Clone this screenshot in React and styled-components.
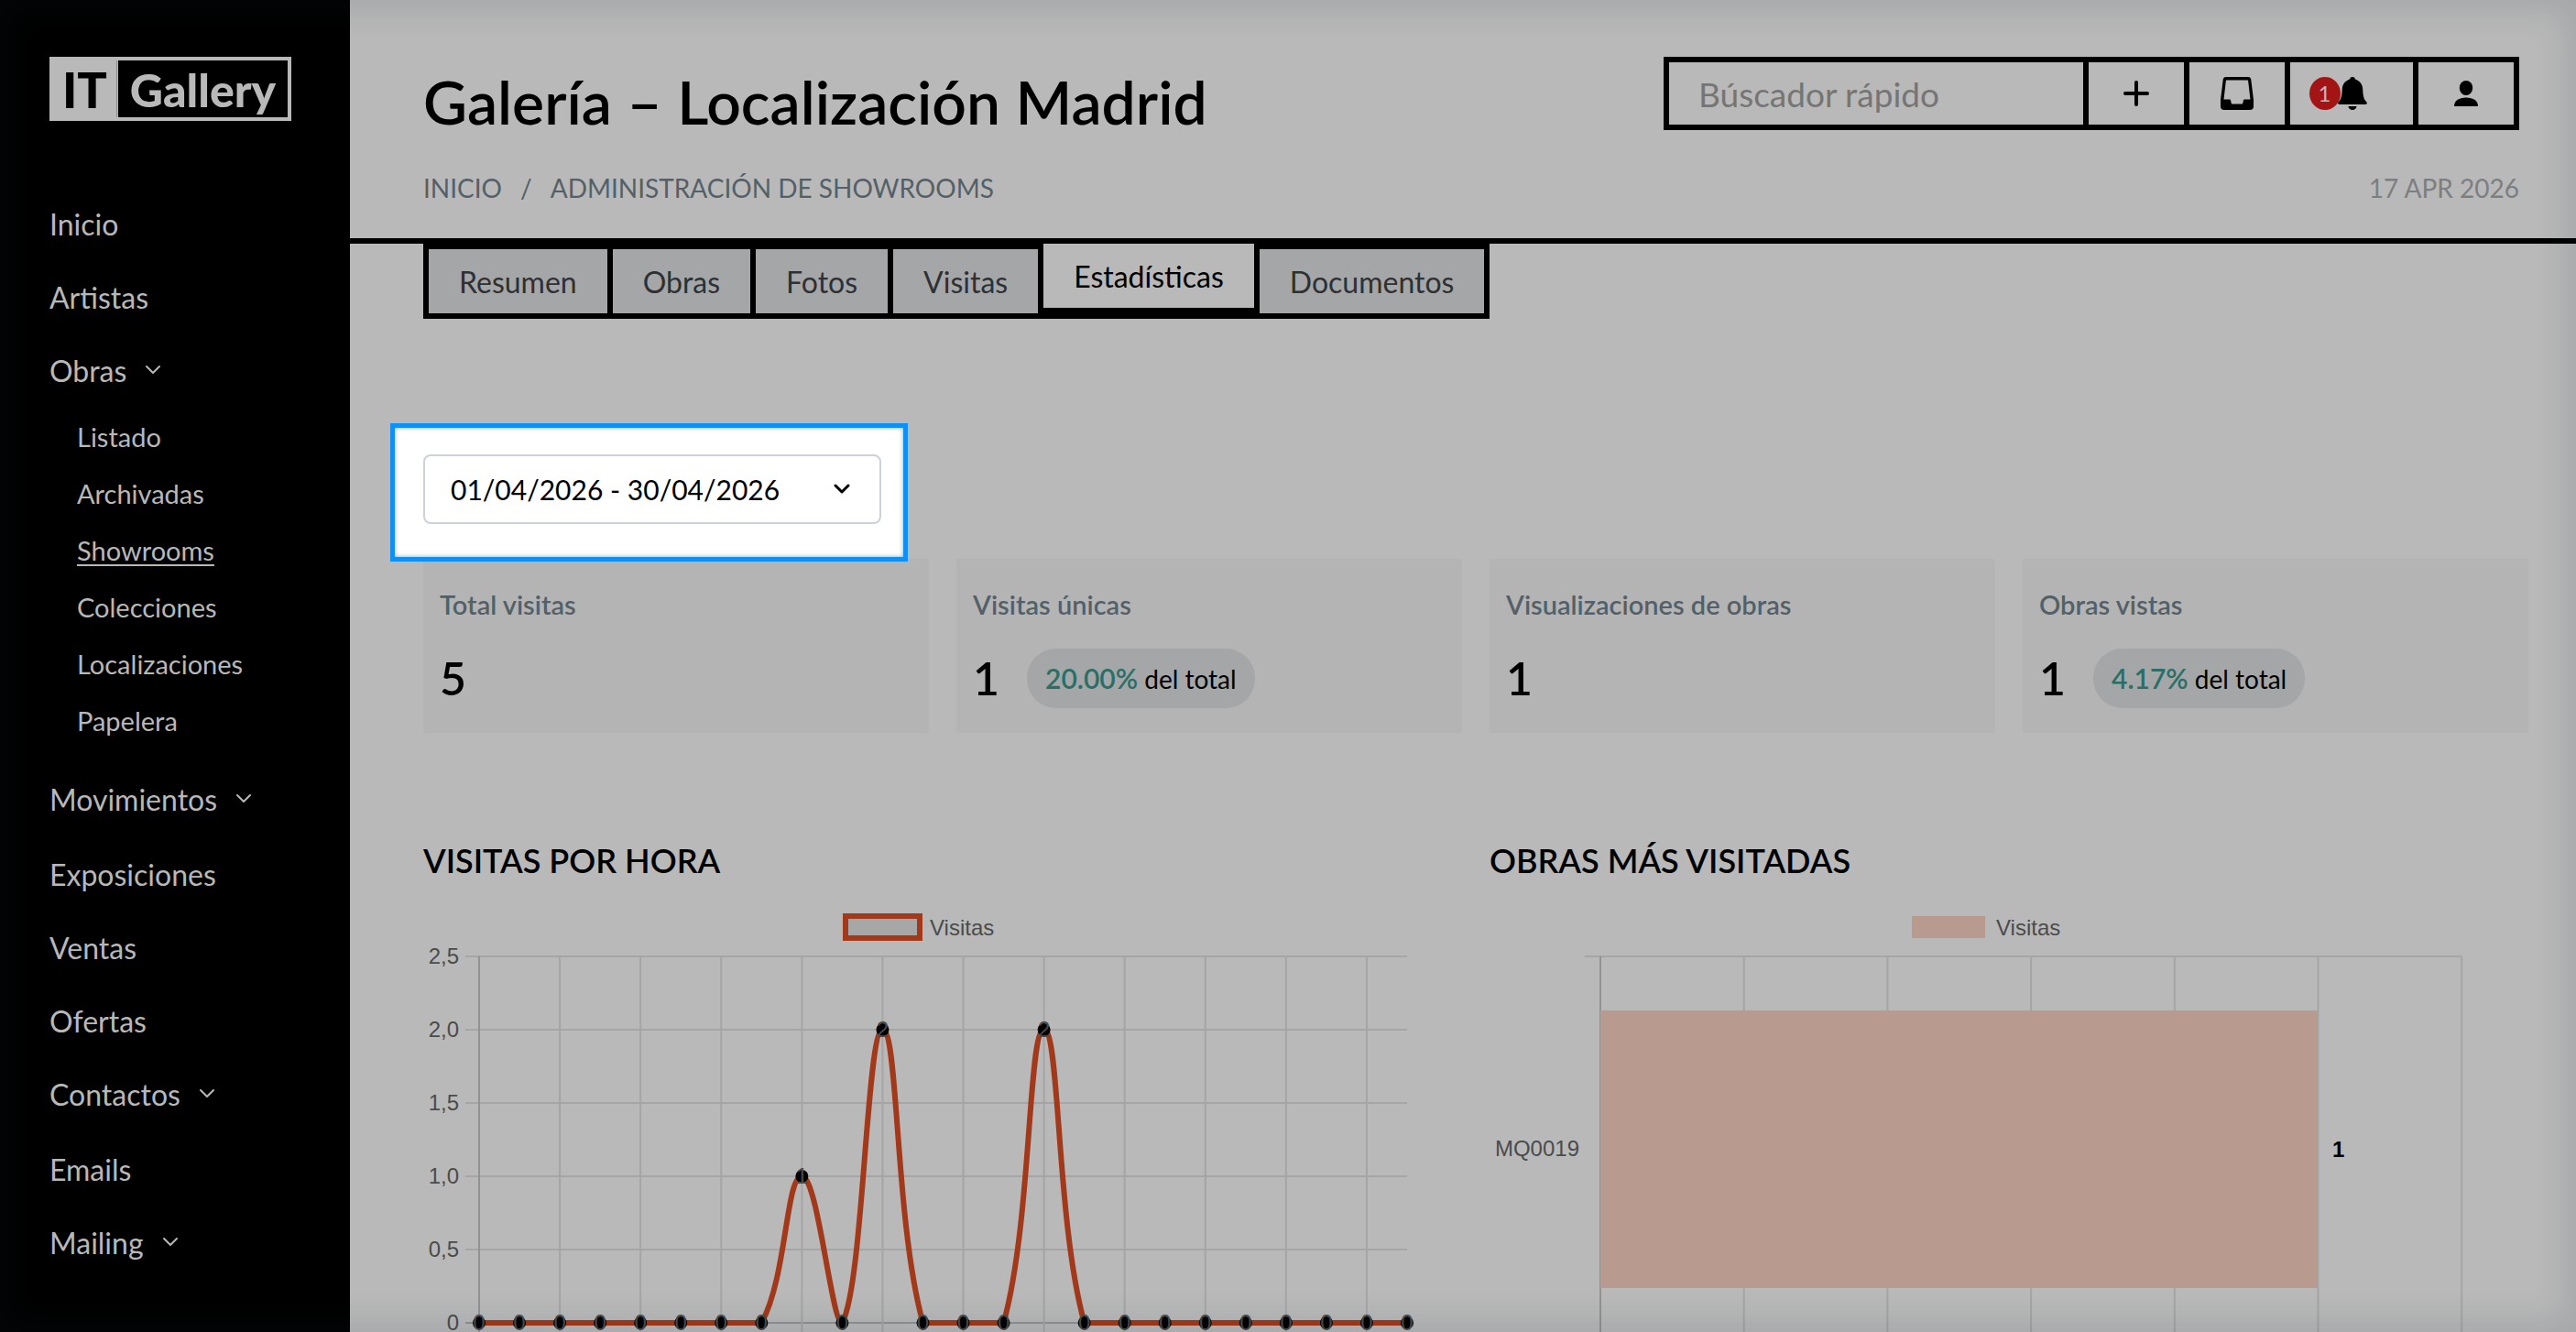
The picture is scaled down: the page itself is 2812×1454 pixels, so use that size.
import React from "react";
import styled, { createGlobalStyle } from "styled-components";

const Global = createGlobalStyle`
  *, *::before, *::after { box-sizing: border-box; }
  html, body { margin: 0; background: #b9b9b9; }
  body, button, input, select { font-family: Lato, "Open Sans", sans-serif; }
  ul { list-style: none; margin: 0; padding: 0; }
  h1, h2, h3, p { margin: 0; }
  a { color: inherit; text-decoration: none; }
  button { margin: 0; border: 0; background: none; cursor: pointer; }
  svg { display: block; }
`;

const Shell = styled.div`
  display: flex;
  height: 100vh;
  overflow: hidden;
  color: #000;
`;

const Vignette = styled.div`
  position: fixed;
  inset: 0;
  pointer-events: none;
  box-shadow: inset 0 0 34px 12px rgba(24, 44, 56, 0.12);
`;

/* Sidebar */
const Sidebar = styled.aside`
  flex: 0 0 382px;
  padding: 62px 54px;
  background: #000;
  color: #b8b8b8;
`;

const Logo = styled.a`
  display: flex;
  width: 264px;
  height: 70px;
  border: 4px solid #b9b9b9;
  background: #b9b9b9;
  font-weight: 900;
  line-height: 64px;
`;

const LogoMark = styled.span`
  flex: 0 0 70px;
  margin-right: 1px;
  border-right: 1px solid #8a8a8a;
  text-align: center;
  color: #000;
  font-size: 54px;
`;

const LogoName = styled.span`
  flex: 1;
  text-align: center;
  color: #b9b9b9;
  background: #000;
  font-size: 50px;
`;

const Menu = styled.ul`
  padding-top: 72px;
`;

const MenuItem = styled.li`
  padding-bottom: ${(p) => (p.$group ? 2 : 0)}px;
`;

const MenuLink = styled.a`
  display: flex;
  align-items: center;
  gap: 20px;
  width: 100%;
  height: 80px;
  padding: 0;
  color: #b8b8b8;
  font-size: 32px;
`;

const SubMenu = styled.ul`
  padding: 2px 0 14px 30px;
`;

const SubLink = styled.a`
  display: block;
  font-size: 29px;
  line-height: 62px;
  text-decoration: ${(p) => (p.$active ? "underline" : "none")};
  text-decoration-thickness: 2px;
  text-underline-offset: 4px;
`;

/* Main column */
const Main = styled.main`
  flex: 1;
  min-width: 0;
`;

const Header = styled.header`
  display: flex;
  flex-direction: column;
  gap: 38px;
  height: 266px;
  padding: 62px 62px 0 80px;
  border-bottom: 6px solid #000;
`;

const HeaderRow = styled.div`
  display: flex;
  justify-content: space-between;
  align-items: center;
`;

const Title = styled.h1`
  padding-top: 18px;
  font-size: 66px;
  font-weight: 600;
  line-height: 62px;
`;

const Toolbar = styled.div`
  display: flex;
  gap: 6px;
  height: 80px;
  padding: 6px;
  background: #000;
`;

const Search = styled.input`
  width: 452px;
  padding: 0 32px;
  border: 0;
  border-radius: 0;
  outline: 0;
  background: #b9b9b9;
  font-size: 37px;
  &::placeholder { color: #757575; opacity: 1; }
`;

const ToolButton = styled.button`
  display: flex;
  align-items: center;
  justify-content: center;
  width: ${(p) => (p.$wide ? 134 : 104)}px;
  padding: 0 ${(p) => (p.$wide ? 30 : 0)}px 0 0;
  background: #b9b9b9;
  color: #000;
`;

const Badge = styled.span`
  width: 34px;
  height: 36px;
  margin-right: -3px;
  border-radius: 50%;
  background: #a31515;
  color: #c9b5b5;
  font-size: 24px;
  line-height: 36px;
  text-align: center;
`;

const Crumbs = styled.nav`
  display: flex;
  gap: 20px;
  color: #546067;
  font-size: 28px;
  line-height: 50px;
`;

const Today = styled.time`
  color: #7c7f81;
  font-size: 28px;
  line-height: 50px;
`;

const Content = styled.div`
  padding: 0 52px 0 80px;
`;

const Tabs = styled.nav`
  display: inline-flex;
  gap: 6px;
  height: 82px;
  padding: 6px;
  background: #000;
  vertical-align: top;
`;

const Tab = styled.a`
  padding: 0 33px;
  margin: ${(p) => (p.$active ? "-6px 0 6px" : "0")};
  background: ${(p) => (p.$active ? "#b9b9b9" : "#a5a6a8")};
  color: ${(p) => (p.$active ? "#000" : "#2f3031")};
  font-size: 32px;
  line-height: 72px;
`;

const Spotlight = styled.div`
  width: 565px;
  margin: 114px 0 -3px -36px;
  padding: 29px 24px 36px 31px;
  border: 5px solid #1090f2;
  background: #fff;
  box-shadow: inset 0 0 5px rgba(0, 0, 0, 0.35);
  position: relative;
`;

const Picker = styled.div`
  display: grid;
  align-items: center;
  height: 76px;
  & > * { grid-area: 1 / 1; }
  & > svg { justify-self: end; margin-right: 34px; pointer-events: none; }
`;

const RangeSelect = styled.select`
  appearance: none;
  width: 100%;
  height: 76px;
  padding: 0 80px 0 28px;
  border: 2px solid #cdd1d8;
  border-radius: 8px;
  background: #fff;
  color: #000;
  font-size: 30px;
`;

const Cards = styled.section`
  display: grid;
  grid-template-columns: repeat(4, 1fr);
  gap: 30px;
`;

const Card = styled.article`
  height: 190px;
  padding: 26px 18px;
  background: #b4b4b4;
`;

const CardLabel = styled.h3`
  color: #546067;
  font-size: 29px;
  font-weight: 600;
  line-height: 48px;
`;

const CardRow = styled.div`
  display: flex;
  align-items: center;
  gap: 30px;
  padding-top: 24px;
  height: 88px;
`;

const Figure = styled.p`
  font-size: 50px;
  font-weight: 600;
  line-height: 64px;
`;

const Pill = styled.p`
  padding: 0 20px;
  border-radius: 32px;
  background: #a5a6a8;
  font-size: 28px;
  line-height: 64px;
`;

const Percent = styled.span`
  color: #2a6f65;
  font-size: 30px;
  font-weight: 600;
`;

const Charts = styled.section`
  display: grid;
  grid-template-columns: repeat(2, 1fr);
  gap: 30px;
  padding-top: 114px;
`;

const ChartTitle = styled.h2`
  font-size: 36px;
  font-weight: 600;
  line-height: 50px;
  padding-bottom: 16px;
`;

const Plot = styled.svg`
  width: 100%;
  height: auto;
  overflow: visible;
  font-family: "Liberation Sans", Arial, sans-serif;
  font-size: 24px;
`;

const Chevron = ({ stroke = 2 }) => (
  <svg width="18" height="12" viewBox="0 0 18 12" fill="none" stroke="currentColor" strokeWidth={stroke} strokeLinecap="round" strokeLinejoin="round" aria-hidden="true">
    <path d="M2 2l7 7 7-7" />
  </svg>
);

const PlusIcon = () => (
  <svg width="28" height="28" viewBox="0 0 28 28" stroke="currentColor" strokeWidth="4" strokeLinecap="round" aria-hidden="true">
    <path d="M14 2v24M2 14h24" />
  </svg>
);

const InboxIcon = () => (
  <svg width="36" height="36" viewBox="0 0 36 36" aria-hidden="true">
    <path fillRule="evenodd" fill="currentColor" d="M6 0h24q3 0 3.300 3L36 25v7q0 4-4 4H4q-4 0-4-4v-7L2.700 3Q3 0 6 0zM6.500 3.500Q6 3.500 5.900 4L3.500 24.500H10q1 0 1 1l1 4h12l1-4q0-1 1-1h6.500L30.100 4q-.1-.5-.6-.5z" />
  </svg>
);

const BellIcon = () => (
  <svg width="32" height="36" viewBox="0 0 32 36" fill="currentColor" aria-hidden="true">
    <path d="M16 0a3 3 0 0 1 3 2.400C24 4 27 8 27.200 13 27.500 20 28 24 31.400 27.400c1 1.300.3 2.600-1.200 2.600H1.800C.3 30-.4 28.700.6 27.400 4 24 4.500 20 4.800 13 5 8 8 4 13 2.400A3 3 0 0 1 16 0z" />
    <path d="M11.500 32h9a4.500 4 0 0 1-9 0z" />
  </svg>
);

const PersonIcon = () => (
  <svg width="26" height="28" viewBox="0 0 26 28" fill="currentColor" aria-hidden="true">
    <ellipse cx="13" cy="8" rx="7.200" ry="8" />
    <path d="M0 28c0-6 5-9.500 13-9.500S26 22 26 28z" />
  </svg>
);

const MENU = [
  { label: "Inicio" },
  { label: "Artistas" },
  { label: "Obras", children: ["Listado", "Archivadas", "Showrooms", "Colecciones", "Localizaciones", "Papelera"] },
  { label: "Movimientos", group: true },
  { label: "Exposiciones" },
  { label: "Ventas" },
  { label: "Ofertas" },
  { label: "Contactos", group: true },
  { label: "Emails" },
  { label: "Mailing", group: true },
];

const TABS = ["Resumen", "Obras", "Fotos", "Visitas", "Estadísticas", "Documentos"];

const CARDS = [
  { label: "Total visitas", value: 5 },
  { label: "Visitas únicas", value: 1, percent: "20.00%" },
  { label: "Visualizaciones de obras", value: 1 },
  { label: "Obras vistas", value: 1, percent: "4.17%" },
];

/* Hourly line chart */
const HOURS = [0, 0, 0, 0, 0, 0, 0, 0, 1, 0, 2, 0, 0, 0, 2, 0, 0, 0, 0, 0, 0, 0, 0, 0];
const LEFT = 61;
const RIGHT = 1074;
const TOP = 64;
const BASE = 464;
const STEP = (RIGHT - LEFT) / (HOURS.length - 1);
const POINTS = HOURS.map((v, i) => ({ x: LEFT + i * STEP, y: BASE - v * 160, v }));

function controls(prev, cur, next) {
  const a = Math.hypot(cur.x - prev.x, cur.y - prev.y);
  const b = Math.hypot(next.x - cur.x, next.y - cur.y);
  const t = 0.4;
  const fa = a + b ? (t * a) / (a + b) : 0;
  const fb = a + b ? (t * b) / (a + b) : 0;
  const clamp = (y) => Math.min(BASE, Math.max(TOP, y));
  return {
    inX: cur.x - fa * (next.x - prev.x),
    inY: clamp(cur.y - fa * (next.y - prev.y)),
    outX: cur.x + fb * (next.x - prev.x),
    outY: clamp(cur.y + fb * (next.y - prev.y)),
  };
}

const CTRL = POINTS.map((p, i) => controls(POINTS[i - 1] || p, p, POINTS[i + 1] || p));
const CURVE = POINTS.map((p, i) =>
  i === 0
    ? `M${p.x} ${p.y}`
    : `C${CTRL[i - 1].outX} ${CTRL[i - 1].outY} ${CTRL[i].inX} ${CTRL[i].inY} ${p.x} ${p.y}`
).join(" ");

const LineChart = () => (
  <Plot viewBox="0 0 1134 500" role="img" aria-label="Visitas por hora">
    <rect x="461" y="20" width="81" height="24" fill="#a7a7a7" stroke="#a2391a" strokeWidth="6" />
    <text x="553" y="41" fill="#4b4b4b">Visitas</text>
    {["2,5", "2,0", "1,5", "1,0", "0,5", "0"].map((t, i) => (
      <g key={t}>
        <line x1="46" x2={RIGHT} y1={TOP + i * 80} y2={TOP + i * 80} stroke={i === 5 ? "#929292" : "#a5a5a5"} strokeWidth="2" />
        <text x="39" y={TOP + i * 80 + 8} textAnchor="end" fill="#4b4b4b">{t}</text>
      </g>
    ))}
    {POINTS.filter((_, i) => i % 2 === 0).map((p, i) => (
      <line key={p.x} x1={p.x} x2={p.x} y1={TOP} y2="500" stroke={i === 0 ? "#929292" : "#a5a5a5"} strokeWidth="2" />
    ))}
    <path d={CURVE} fill="none" stroke="#a2391a" strokeWidth="6" />
    {POINTS.map((p) => (
      <g key={p.x}>
        <circle cx={p.x} cy={p.y} r="7" />
        <text x={p.x} y={p.y + 8} textAnchor="middle" fill="#4b4b4b">{p.v}</text>
      </g>
    ))}
  </Plot>
);

const BarChart = () => (
  <Plot viewBox="0 0 1134 500" role="img" aria-label="Obras más visitadas">
    <rect x="461" y="20" width="80" height="24" fill="#b89a8f" />
    <text x="553" y="41" fill="#4b4b4b">Visitas</text>
    <line x1="104" x2="1061" y1={TOP} y2={TOP} stroke="#a5a5a5" strokeWidth="2" />
    {[0, 1, 2, 3, 4, 5, 6].map((i) => (
      <line key={i} x1={121 + i * 156.7} x2={121 + i * 156.7} y1={TOP} y2="500" stroke={i === 0 ? "#929292" : "#a5a5a5"} strokeWidth="2" />
    ))}
    <rect x="121" y="123" width="783" height="303" fill="#b89a8f" />
    <text x="98" y="282" textAnchor="end" fill="#4b4b4b">MQ0019</text>
    <text x="920" y="283" fontWeight="700">1</text>
  </Plot>
);

export default function App() {
  return (
    <>
      <Global />
      <Shell>
        <Sidebar>
          <Logo href="#" aria-label="IT Gallery">
            <LogoMark>IT</LogoMark>
            <LogoName>Gallery</LogoName>
          </Logo>
          <Menu>
            {MENU.map((m) => (
              <MenuItem key={m.label} $group={m.group}>
                {m.group || m.children ? (
                  <MenuLink as="button" type="button">
                    {m.label}
                    <Chevron />
                  </MenuLink>
                ) : (
                  <MenuLink href="#">{m.label}</MenuLink>
                )}
                {m.children && (
                  <SubMenu>
                    {m.children.map((c) => (
                      <li key={c}>
                        <SubLink href="#" $active={c === "Showrooms"}>{c}</SubLink>
                      </li>
                    ))}
                  </SubMenu>
                )}
              </MenuItem>
            ))}
          </Menu>
        </Sidebar>
        <Main>
          <Header>
            <HeaderRow>
              <Title>Galería – Localización Madrid</Title>
              <Toolbar>
                <Search type="search" placeholder="Búscador rápido" aria-label="Búscador rápido" />
                <ToolButton type="button" aria-label="Añadir"><PlusIcon /></ToolButton>
                <ToolButton type="button" aria-label="Bandeja"><InboxIcon /></ToolButton>
                <ToolButton type="button" aria-label="Notificaciones" $wide>
                  <Badge>1</Badge>
                  <BellIcon />
                </ToolButton>
                <ToolButton type="button" aria-label="Cuenta"><PersonIcon /></ToolButton>
              </Toolbar>
            </HeaderRow>
            <HeaderRow>
              <Crumbs aria-label="Ruta">
                <a href="#">INICIO</a>
                <span>/</span>
                <a href="#">ADMINISTRACIÓN DE SHOWROOMS</a>
              </Crumbs>
              <Today dateTime="2026-04-17">17 APR 2026</Today>
            </HeaderRow>
          </Header>
          <Content>
            <Tabs>
              {TABS.map((t) => (
                <Tab key={t} href="#" $active={t === "Estadísticas"}>{t}</Tab>
              ))}
            </Tabs>
            <Spotlight>
              <Picker>
                <RangeSelect aria-label="Rango de fechas">
                  <option>01/04/2026 - 30/04/2026</option>
                </RangeSelect>
                <Chevron stroke={3} />
              </Picker>
            </Spotlight>
            <Cards>
              {CARDS.map((c) => (
                <Card key={c.label}>
                  <CardLabel>{c.label}</CardLabel>
                  <CardRow>
                    <Figure>{c.value}</Figure>
                    {c.percent && (
                      <Pill>
                        <Percent>{c.percent}</Percent> del total
                      </Pill>
                    )}
                  </CardRow>
                </Card>
              ))}
            </Cards>
            <Charts>
              <div>
                <ChartTitle>VISITAS POR HORA</ChartTitle>
                <LineChart />
              </div>
              <div>
                <ChartTitle>OBRAS MÁS VISITADAS</ChartTitle>
                <BarChart />
              </div>
            </Charts>
          </Content>
        </Main>
      </Shell>
      <Vignette />
    </>
  );
}
